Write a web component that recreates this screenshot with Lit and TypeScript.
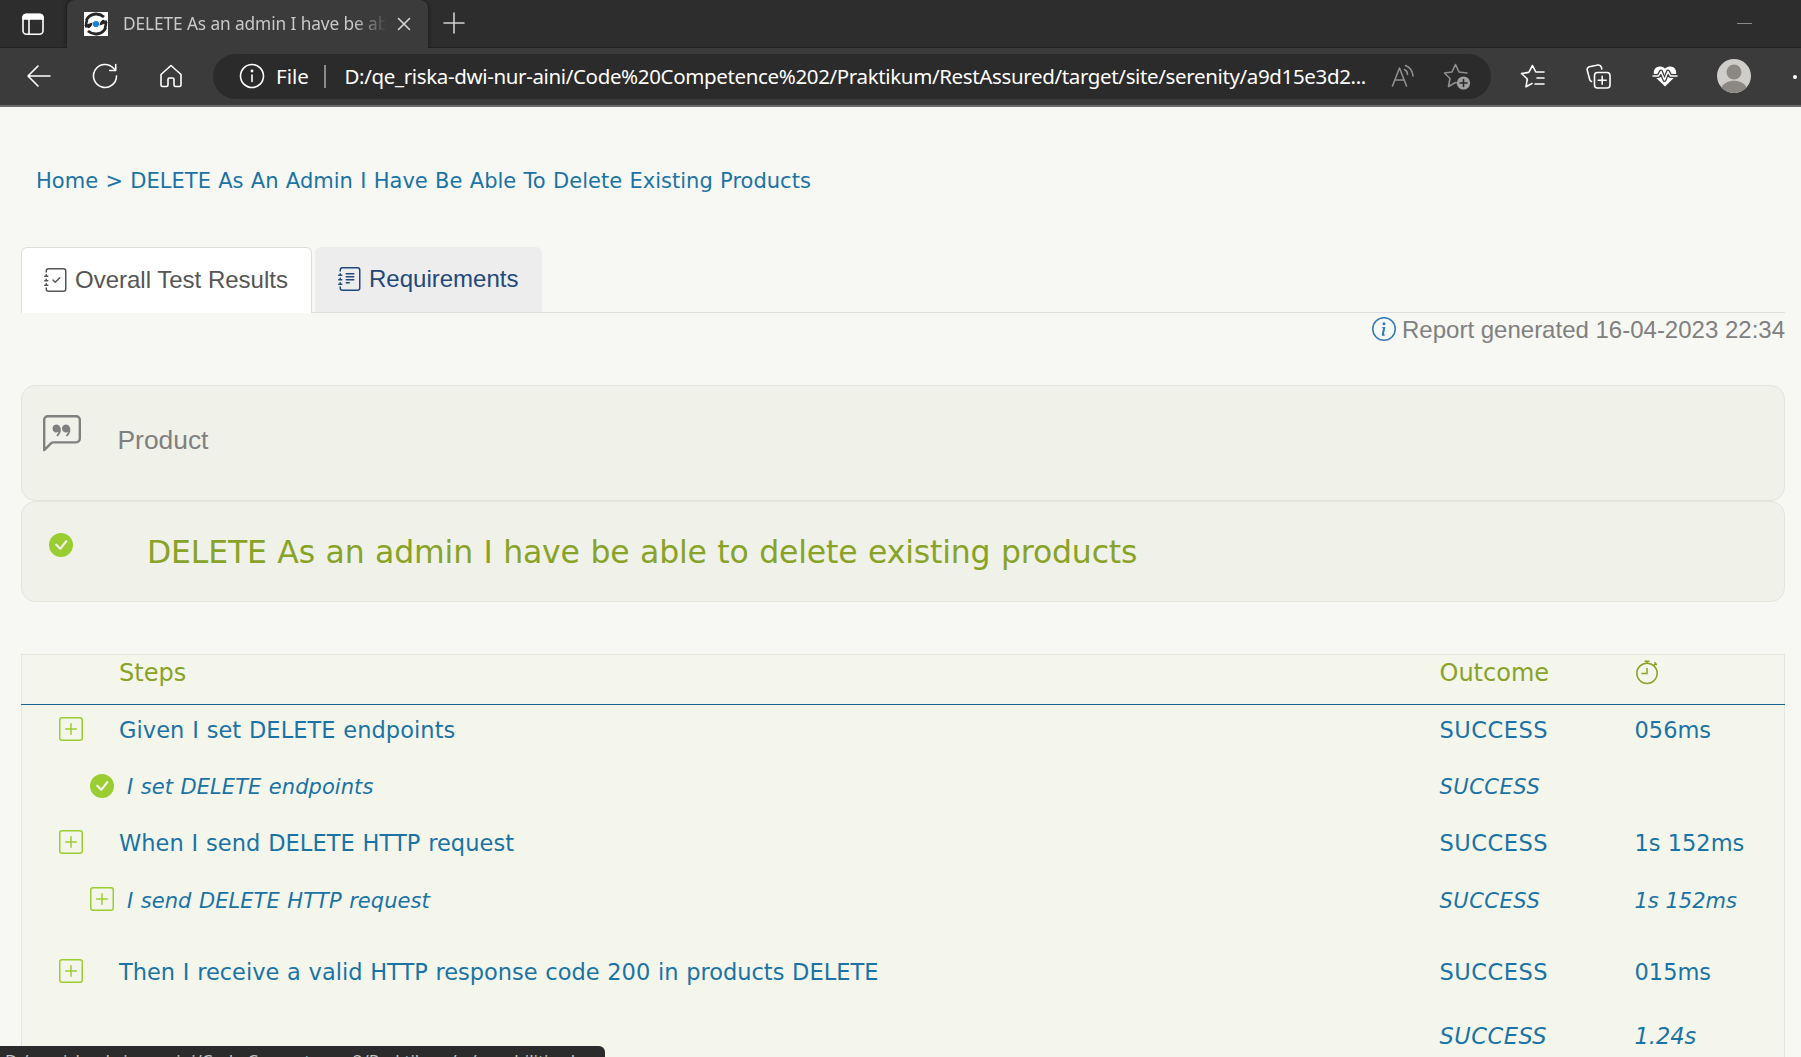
import { LitElement, html, css, svg } from "lit";
import { customElement, property } from "lit/decorators.js";

const icons: Record<string, unknown> = {
  journal: svg`<path d="M3 0h10a2 2 0 0 1 2 2v12a2 2 0 0 1-2 2H3a2 2 0 0 1-2-2v-1h1v1a1 1 0 0 0 1 1h10a1 1 0 0 0 1-1V2a1 1 0 0 0-1-1H3a1 1 0 0 0-1 1v1H1V2a2 2 0 0 1 2-2z"/><path d="M1 5v-.5a.5.5 0 0 1 1 0V5h.5a.5.5 0 0 1 0 1h-2a.5.5 0 0 1 0-1H1zm0 3v-.5a.5.5 0 0 1 1 0V8h.5a.5.5 0 0 1 0 1h-2a.5.5 0 0 1 0-1H1zm0 3v-.5a.5.5 0 0 1 1 0v.5h.5a.5.5 0 0 1 0 1h-2a.5.5 0 0 1 0-1H1z"/>`,
  tick: svg`<path d="M10.854 6.146a.5.5 0 0 1 0 .708l-3 3a.5.5 0 0 1-.708 0l-1.5-1.5a.5.5 0 1 1 .708-.708L7.5 8.793l2.646-2.647a.5.5 0 0 1 .708 0z"/>`,
  lines: svg`<path d="M5 10.5a.5.5 0 0 1 .5-.5h2a.5.5 0 0 1 0 1h-2a.5.5 0 0 1-.5-.5zm0-2a.5.5 0 0 1 .5-.5h5a.5.5 0 0 1 0 1h-5a.5.5 0 0 1-.5-.5zm0-2a.5.5 0 0 1 .5-.5h5a.5.5 0 0 1 0 1h-5a.5.5 0 0 1-.5-.5zm0-2a.5.5 0 0 1 .5-.5h5a.5.5 0 0 1 0 1h-5a.5.5 0 0 1-.5-.5z"/>`,
  info: svg`<path d="M8 15A7 7 0 1 1 8 1a7 7 0 0 1 0 14zm0 1A8 8 0 1 0 8 0a8 8 0 0 0 0 16z"/><path d="m8.93 6.588-2.29.287-.082.38.45.083c.294.07.352.176.288.469l-.738 3.468c-.194.897.105 1.319.808 1.319.545 0 1.178-.252 1.465-.598l.088-.416c-.2.176-.492.246-.686.246-.275 0-.375-.193-.304-.533L8.93 6.588zM9 4.5a1 1 0 1 1-2 0 1 1 0 0 1 2 0z"/>`,
  check: svg`<path d="M16 8A8 8 0 1 1 0 8a8 8 0 0 1 16 0zm-3.97-3.03a.75.75 0 0 0-1.08.022L7.477 9.417 5.384 7.323a.75.75 0 0 0-1.06 1.06L6.97 11.03a.75.75 0 0 0 1.079-.02l3.992-4.99a.75.75 0 0 0-.01-1.05z"/>`,
  plus: svg`<path d="M14 1a1 1 0 0 1 1 1v12a1 1 0 0 1-1 1H2a1 1 0 0 1-1-1V2a1 1 0 0 1 1-1h12zM2 0a2 2 0 0 0-2 2v12a2 2 0 0 0 2 2h12a2 2 0 0 0 2-2V2a2 2 0 0 0-2-2H2z"/><path d="M8 4a.5.5 0 0 1 .5.5v3h3a.5.5 0 0 1 0 1h-3v3a.5.5 0 0 1-1 0v-3h-3a.5.5 0 0 1 0-1h3v-3A.5.5 0 0 1 8 4z"/>`,
  quote: svg`<path d="M14 1a1 1 0 0 1 1 1v8a1 1 0 0 1-1 1H4.414A2 2 0 0 0 3 11.586l-2 2V2a1 1 0 0 1 1-1h12zM2 0a2 2 0 0 0-2 2v12.793a.5.5 0 0 0 .854.353l2.853-2.853A1 1 0 0 1 4.414 12H14a2 2 0 0 0 2-2V2a2 2 0 0 0-2-2H2z"/><path d="M7.066 4.76A1.665 1.665 0 0 0 4 5.668a1.667 1.667 0 0 0 2.561 1.406c-.131.389-.375.804-.777 1.22a.417.417 0 1 0 .6.58c1.486-1.54 1.293-3.214.682-4.112zm4 0A1.665 1.665 0 0 0 8 5.668a1.667 1.667 0 0 0 2.561 1.406c-.131.389-.375.804-.777 1.22a.417.417 0 1 0 .6.58c1.486-1.54 1.293-3.214.682-4.112z"/>`,
  stopwatch: svg`<g fill="none" stroke="currentColor" stroke-width="1"><circle cx="8" cy="8.900" r="6.800"/><path d="M8 5.300V9H4.300"/><path d="M6.300.9h3.400M8 1v1.300M12.900 1.600l1.700 1.700M13.600 2.600l-1 1"/></g>`,
};

@customElement("glyph-icon")
export class GlyphIcon extends LitElement {
  @property() name = "";
  @property() extra = "";
  static styles = css`
    :host { display: block; flex: none; width: 24px; height: 24px; }
    svg { display: block; width: 100%; height: 100%; fill: currentColor; overflow: visible; }
  `;
  render() {
    return html`<svg viewBox="0 0 16 16">${icons[this.name]}${this.extra ? icons[this.extra] : ""}</svg>`;
  }
}

@customElement("browser-chrome")
export class BrowserChrome extends LitElement {
  static styles = css`
    :host { display: block; height: 107px; font-family: "Noto Sans", "Open Sans", sans-serif; color: #fff; }
    svg { display: block; flex: none; fill: none; stroke: #fff; stroke-width: 1.6; stroke-linecap: round; stroke-linejoin: round; }
    .strip { height: 48px; display: flex; background: #2d2d2d; box-sizing: border-box; border-bottom: 1px solid #232323; }
    .side { width: 67px; display: flex; align-items: center; padding-left: 21px; box-sizing: border-box; }
    .tab { width: 361px; height: 48px; display: flex; align-items: center; background: #3b3b3b; border-radius: 8px 8px 0 0; box-shadow: 0 0 4px #171717; clip-path: inset(0 -6px 0 -6px); box-sizing: border-box; padding-left: 17px; }
    .name { width: 262px; margin: -1px 0 0 15px; font-size: 17.3px; letter-spacing: -.1px; white-space: nowrap; overflow: hidden; color: #c9c9c9; -webkit-mask-image: linear-gradient(90deg, #000 88%, transparent 101%); mask-image: linear-gradient(90deg, #000 88%, transparent 101%); }
    .close { margin-left: 12px; }
    .add { margin: 12px 0 0 15px; }
    .min { margin: 23px 49px 0 auto; width: 15px; height: 1px; background: #8b8b8b; }
    .bar { height: 57px; display: flex; align-items: center; background: #3b3b3b; border-bottom: 2px solid #6b6b6b; overflow: hidden; }
    .bar > svg { margin-top: -1px; }
    .back { margin-left: 26px; }
    .reload { margin-left: 40px; }
    .home { margin-left: 41px; }
    .pill { margin-left: 30px; width: 1278px; height: 45px; border-radius: 23px; background: #2b2b2b; display: flex; align-items: center; box-sizing: border-box; padding: 0 0 1px 26px; font-size: 20.5px; white-space: nowrap; }
    .file { width: 31px; margin: -1px 0 0 11px; }
    .sep { width: 1.5px; height: 23px; margin: 0 19px 0 17px; background: #8a8a8a; }
    .url { width: 1023px; margin-top: -1px; letter-spacing: -.355px; }
    .read { margin-left: 23px; }
    .fav { margin-left: 28px; }
    .favs { margin-left: 29px; }
    .coll { margin-left: 40px; }
    .heart { margin-left: 41px; }
    .face { margin-left: 39px; }
    .dot { width: 4px; height: 4px; border-radius: 50%; background: #fff; margin-left: 42px; flex: none; }
  `;
  render() {
    return html`
      <div class="strip">
        <div class="side"><svg width="24" height="24" viewBox="0 0 24 24"><rect x="2" y="2.2" width="20" height="20" rx="3.5"/><path d="M2 5.5a3 3 0 0 1 3-3h14a3 3 0 0 1 3 3V7H2z" fill="#fff"/><path d="M8 7v15"/></svg></div>
        <div class="tab">
          <svg width="24" height="24" viewBox="0 0 24 24"><rect width="24" height="24" fill="#fff" stroke="none"/><g stroke="#262626" stroke-width="2.800" stroke-linecap="butt"><path d="M2.300 8.500C5 1.500 14 0 20 5"/><path d="M21.700 15.500C19 22.500 10 24 4 19"/></g><g fill="#262626" stroke="none"><path d="M0 13.200L8.600 10.600C8 14.500 6 16.300 4.400 16.300L3 15z"/><path d="M24 10.800L15.400 13.400C16 9.500 18 7.700 19.600 7.700L21 9z"/><path d="M20.200 8.500h2.600c.8 3 .4 6-1 8.200l-2.200-1.200c1-2 1.200-4.500.6-7zM3.800 15.500H1.200c-.8-3-.4-6 1-8.200l2.200 1.200c-1 2-1.200 4.500-.6 7z"/></g><circle cx="12" cy="12" r="3.100" fill="#1783d8" stroke="none"/></svg>
          <div class="name">DELETE As an admin I have be able to</div>
          <svg class="close" width="14" height="14" viewBox="0 0 14 14"><path d="M1.500 1.500l11 11m0-11l-11 11" stroke="#d6d6d6"/></svg>
        </div>
        <svg class="add" width="22" height="22" viewBox="0 0 22 22"><path d="M11 1v20M1 11h20" stroke="#d0d0d0"/></svg>
        <div class="min"></div>
      </div>
      <div class="bar">
        <svg class="back" width="26" height="24" viewBox="0 0 26 24"><path d="M24 12H2M12 2L2 12l10 10"/></svg>
        <svg class="reload" width="26" height="26" viewBox="0 0 26 26"><path d="M24.500 13a11.500 11.500 0 1 1-3-7.800l2 2M23.700 1.500v6h-6"/></svg>
        <svg class="home" width="24" height="24" viewBox="0 0 24 24"><path d="M2 10.500L12 1.500l10 9V21a1.500 1.500 0 0 1-1.500 1.500h-4A1.500 1.500 0 0 1 15 21v-5.500a1.500 1.500 0 0 0-1.500-1.500h-3A1.500 1.500 0 0 0 9 15.500V21a1.500 1.500 0 0 1-1.500 1.500h-4A1.500 1.500 0 0 1 2 21z"/></svg>
        <div class="pill">
          <svg width="26" height="26" viewBox="0 0 26 26"><circle cx="13" cy="13" r="11.500"/><path d="M13 12v6.500"/><circle cx="13" cy="8" r=".6" fill="#fff"/></svg>
          <div class="file">File</div><div class="sep"></div>
          <div class="url">D:/qe_riska-dwi-nur-aini/Code%20Competence%202/Praktikum/RestAssured/target/site/serenity/a9d15e3d2...</div>
          <svg class="read" width="24" height="24" viewBox="0 0 24 24"><g stroke="#8f8f8f"><path d="M1.500 22L8.500 4l7 18M4 16h9"/><path d="M13.500 5.500c2 1 3 2.800 3 5M14.500 1.500c4 1.600 7 5.500 7.500 10.500"/></g></svg>
          <svg class="fav" width="28" height="28" viewBox="0 0 28 28"><path d="M13.500 20.800l-1-.3-7 4 1.500-8L1.500 11l7.500-1 3.500-7.500L16 10l8 1" stroke="#8f8f8f"/><circle cx="20.500" cy="21" r="6.600" fill="#a0a0a0" stroke="none"/><path d="M20.500 17.500v7M17 21h7" stroke="#2b2b2b"/></svg>
        </div>
        <svg class="favs" width="26" height="24" viewBox="0 0 26 24"><path d="M12 19.500l-6 3.300L7.300 15 1.500 9.500l7.300-1.100L12.500 1.500l3.300 6.500H24M17 14h7M15 20h9"/></svg>
        <svg class="coll" width="25" height="25" viewBox="0 0 25 25"><rect x="8.500" y="8.500" width="15.500" height="15.500" rx="3"/><path d="M16.200 12.200v8M12.200 16.200h8M5.500 17.500a3 3 0 0 1-1.800-2L1.200 6a3 3 0 0 1 2-3.300L12 1a3 3 0 0 1 3.300 2l.5 2"/></svg>
        <svg class="heart" width="26" height="24" viewBox="0 0 26 24"><path d="M13 22.500L3.500 13.300C-1.500 7 5-1.500 13 4.500 21-1.500 27.500 7 22.500 13.300z" fill="#fff" stroke="none"/><path d="M0 12h6.500l2.500-4.500 3.500 8.500L16 7.500l2.500 4.500H26" stroke="#3b3b3b" stroke-width="4"/><path d="M1 12h5.500l2.500-4.500 3.500 8.500L16 7.500l2.500 4.500H25" stroke-width="1.500"/></svg>
        <svg class="face" width="34" height="34" viewBox="0 0 34 34"><g stroke="none"><circle cx="17" cy="17" r="17" fill="#cfcdca"/><circle cx="17" cy="13" r="7.500" fill="#8c8884"/><path d="M4.500 28.500C8 19.500 26 19.500 29.500 28.500A17 17 0 0 1 4.500 28.500z" fill="#8c8884"/></g></svg>
        <div class="dot"></div>
      </div>`;
  }
}

interface Step { kind: string; icon: string; text: string; outcome: string; time: string; }

const steps: Step[] = [
  { kind: "main", icon: "plus", text: "Given I set DELETE endpoints", outcome: "SUCCESS", time: "056ms" },
  { kind: "sub", icon: "check", text: "I set DELETE endpoints", outcome: "SUCCESS", time: "" },
  { kind: "main", icon: "plus", text: "When I send DELETE HTTP request", outcome: "SUCCESS", time: "1s 152ms" },
  { kind: "sub group-end", icon: "plus", text: "I send DELETE HTTP request", outcome: "SUCCESS", time: "1s 152ms" },
  { kind: "main tall", icon: "plus", text: "Then I receive a valid HTTP response code 200 in products DELETE", outcome: "SUCCESS", time: "015ms" },
  { kind: "total", icon: "", text: "", outcome: "SUCCESS", time: "1.24s" },
];

@customElement("step-table")
export class StepTable extends LitElement {
  static styles = css`
    :host { display: block; border: 1px solid #e3e6df; background: #f4f6ec; color: #1a73a4; font: 22.5px/28px "DejaVu Sans", sans-serif; white-space: nowrap; }
    .row { display: grid; grid-template-columns: 97px 1fr 195px 149.5px; align-items: center; height: 49px; }
    .head { color: #88a327; margin: 0 -1px; padding: 0 1px; height: 49px; border-bottom: 1px solid #17658c; font-size: 24px; }
    .head > * { margin-bottom: 14px; }
    .head > .watch { margin-bottom: 16px; color: #88a327; }
    .text { letter-spacing: .05px; word-spacing: .6px; }
    .tall .text { letter-spacing: 0; word-spacing: .55px; }
    .outcome { letter-spacing: .5px; }
    .sub { height: 64px; font-size: 21px; font-style: italic; }
    .group-end { height: 66px; }
    .tall { height: 77px; }
    .total { height: 52px; font-style: italic; }
    .lead { display: flex; padding: 0 0 2px 37px; color: #9acd32; }
    .sub .lead { padding: 0 0 1px 68px; }
    .group-end .lead { padding-bottom: 2px; }
    .sub .text { padding-left: 8px; word-spacing: .8px; }
    .sub .text, .sub .outcome, .sub .time { padding-top: 2px; }
    .group-end .text, .group-end .outcome, .group-end .time { padding-top: 1px; }
  `;
  render() {
    return html`
      <div class="row head"><div></div><div>Steps</div><div>Outcome</div><glyph-icon class="watch" name="stopwatch"></glyph-icon></div>
      ${steps.map((s) => html`<div class="row ${s.kind}">
        <div class="lead">${s.icon ? html`<glyph-icon name=${s.icon}></glyph-icon>` : ""}</div>
        <div class="text">${s.text}</div><div class="outcome">${s.outcome}</div><div class="time">${s.time}</div>
      </div>`)}`;
  }
}

@customElement("app-root")
export class AppRoot extends LitElement {
  static styles = css`
    :host { display: block; position: relative; height: 1057px; overflow: hidden; background: #f7f8f3; white-space: nowrap; font-family: "Liberation Sans", sans-serif; }
    .page { padding: 0 16px 0 21px; }
    .crumb { height: 140px; box-sizing: border-box; padding: 60px 0 0 15px; font: 21px/28px "DejaVu Sans", sans-serif; letter-spacing: .02px; word-spacing: .6px; color: #1a73a4; }
    .tabs { display: flex; gap: 3px; height: 66px; box-sizing: border-box; border-bottom: 1px solid #dcdfdd; font-size: 24px; }
    .tab { display: flex; align-items: center; gap: 7px; height: 65px; box-sizing: border-box; padding: 0 0 1px 23px; width: 227px; background: #ededed; color: #23497a; border-radius: 6px 6px 0 0; }
    .active { width: 291px; height: 66px; padding: 0 0 2px 22px; background: #fff; color: #555; border: 1px solid #dcdddd; border-bottom: 0; }
    .stamp { display: flex; justify-content: flex-end; gap: 6px; align-items: center; height: 34px; color: #808080; font-size: 24px; }
    .stamp glyph-icon { color: #337ab7; margin-top: -2px; }
    .card { display: flex; box-sizing: border-box; border: 1px solid #e4e6de; border-radius: 14px; background: #f0f1e8; }
    .product { margin-top: 38px; height: 116px; padding: 29px 0 0 21px; gap: 36.5px; color: #808080; font-size: 26.4px; }
    .product glyph-icon { width: 38px; height: 38px; }
    .product span { padding-top: 10px; line-height: 30px; }
    .title { height: 101px; padding: 31px 0 0 27px; gap: 74px; color: #88a327; font: 31.5px/36px "DejaVu Sans", sans-serif; letter-spacing: -.16px; word-spacing: .7px; }
    .title span { padding-top: 1px; }
    .title glyph-icon { color: #9acd32; }
    step-table { margin-top: 52px; }
    .status { position: absolute; left: 0; bottom: 0; width: 605px; height: 11px; box-sizing: border-box; overflow: hidden; padding: 4px 0 0 5px; border-radius: 0 6px 0 0; background: #2b2b2b; color: #c4c4c4; font: 17px/22px "Noto Sans", sans-serif; }
  `;
  render() {
    return html`
      <browser-chrome></browser-chrome>
      <div class="page">
        <div class="crumb">Home &gt; DELETE As An Admin I Have Be Able To Delete Existing Products</div>
        <div class="tabs">
          <div class="tab active"><glyph-icon name="journal" extra="tick"></glyph-icon>Overall Test Results</div>
          <div class="tab"><glyph-icon name="journal" extra="lines"></glyph-icon>Requirements</div>
        </div>
        <div class="stamp"><glyph-icon name="info"></glyph-icon>Report generated 16-04-2023 22:34</div>
        <div class="card product"><glyph-icon name="quote"></glyph-icon><span>Product</span></div>
        <div class="card title"><glyph-icon name="check"></glyph-icon><span>DELETE As an admin I have be able to delete existing products</span></div>
        <step-table></step-table>
      </div>
      <div class="status">D:/qe_riska-dwi-nur-aini/Code Competence 2/Praktikum/.../capabilities.h...</div>`;
  }
}
